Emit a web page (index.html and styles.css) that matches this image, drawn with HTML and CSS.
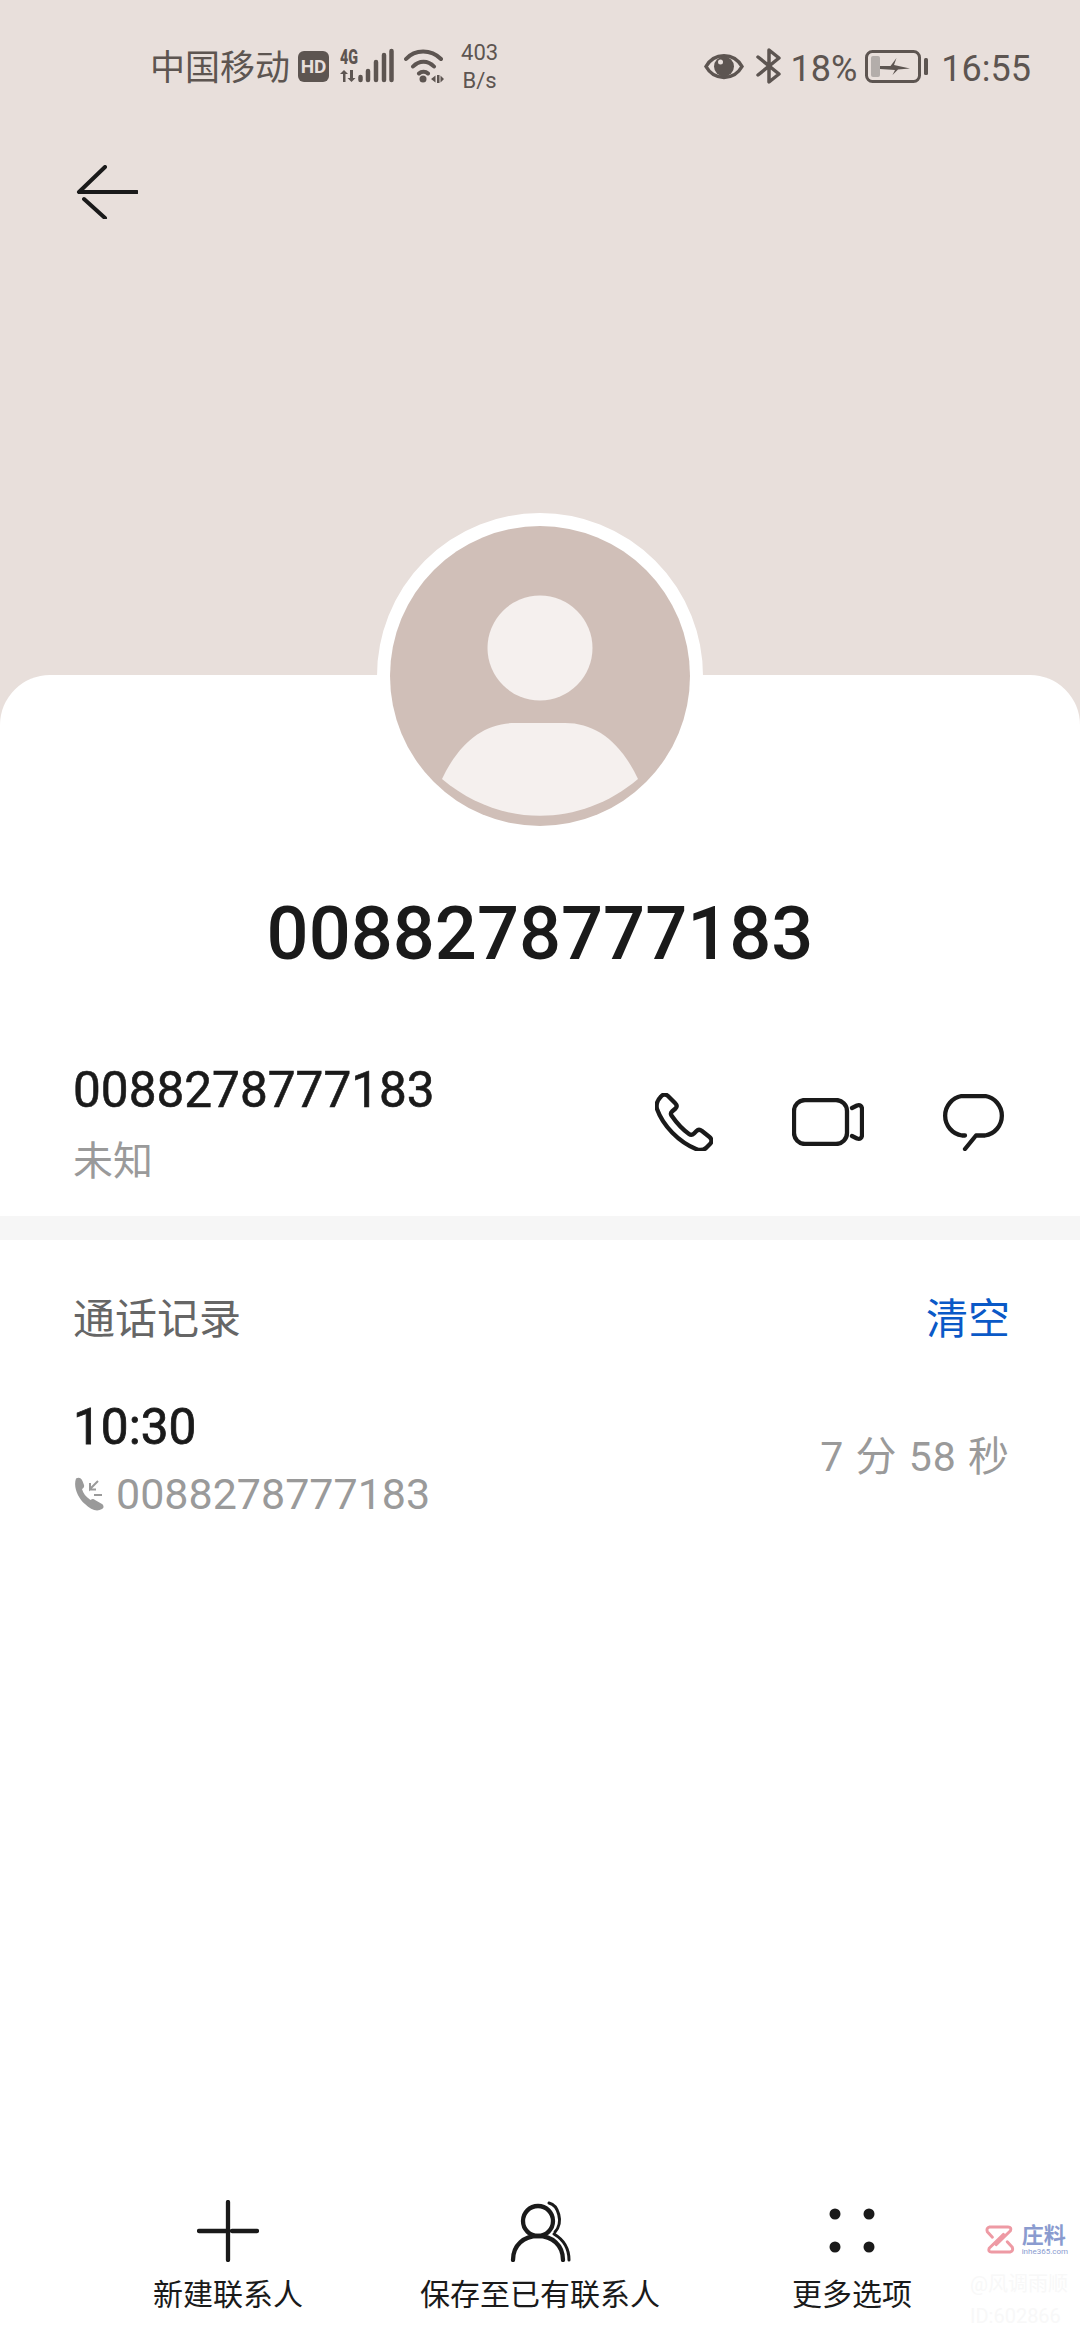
FILE: index.html
```html
<!DOCTYPE html>
<html lang="zh">
<head>
<meta charset="utf-8">
<title>0088278777183</title>
<link rel="stylesheet" href="styles.css">
</head>
<body>
<div class="page">
  <header class="top">
    <div class="status">
      <div class="status-group">
        <span class="carrier">中国移动</span>
        <span class="hd">HD</span>
        <svg class="sig" width="54" height="40" viewBox="0 -6 54 40">
          <text x="0" y="15" class="sig-text" textLength="18" lengthAdjust="spacingAndGlyphs">4G</text>
          <path d="M3 33V25H0L4 21L8 25H5.500V33ZM10 21V29H7.500L11.500 33L15.500 29H13V21Z" fill="#5d5551"/>
          <path d="M20.500 31v-3M28 31V22M36 31V13M44 31V6M51.500 31V2" class="bars"/>
        </svg>
        <svg class="wifi" width="40" height="35" viewBox="0 0 40 35">
          <path d="M2 10C11 0 27 0 37 10M9 17.500C15 11 24 11 30 17.500M15 24.500C17.500 22 21.500 22 24 24.500" class="wave"/>
          <circle cx="19" cy="30" r="3.500" fill="#5d5551"/>
          <path d="M27 30l4.500-3.500v7zM33 26h2.500v8H33zM36.500 26.500l3.500 3.500-3.500 3.500z" fill="#5d5551"/>
        </svg>
        <span class="speed">403<br>B/s</span>
      </div>
      <div class="status-group">
        <svg width="40" height="27" viewBox="0 0 40 27">
          <path d="M2 13.500C10-1 30-1 38 13.500C30 28 10 28 2 13.500Z" fill="none" stroke="#5d5551" stroke-width="3.500"/>
          <circle cx="20" cy="13.500" r="10" fill="#5d5551"/>
          <circle cx="16.500" cy="9" r="2.500" fill="#e8dfdb"/>
        </svg>
        <svg class="bt" width="25" height="36" viewBox="0 0 25 36">
          <path d="M2 9L23 26L13 34V2L23 10L2 27" fill="none" stroke="#5d5551" stroke-width="3.500" stroke-linejoin="round" stroke-linecap="round"/>
        </svg>
        <span class="pct">18%</span>
        <svg class="batt" width="63" height="33" viewBox="0 0 63 33">
          <rect x="1.500" y="1.500" width="53" height="30" rx="6" fill="none" stroke="#5d5551" stroke-width="3"/>
          <rect x="6" y="6" width="9" height="21" rx="2" fill="#b3adaa"/>
          <path d="M15 16H25.500L31.500 8L29 15L45 18.500L33 19.500L27.500 25L30 20L15 19Z" fill="#5d5551"/>
          <rect x="59" y="8" width="4" height="17" rx="1.500" fill="#5d5551"/>
        </svg>
        <span class="clock">16:55</span>
      </div>
    </div>
    <svg class="back" width="62" height="54" viewBox="0 0 62 54">
      <path d="M3 27H61M3 27L29 2M8 34L29 53" fill="none" stroke="#1a1a1a" stroke-width="4" stroke-linecap="round"/>
    </svg>
  </header>

  <main class="card">
    <div class="avatar">
      <svg width="300" height="300" viewBox="0 0 300 300">
        <circle cx="150" cy="150" r="150" fill="#d0bfb8"/>
        <circle cx="150" cy="122" r="52.500" fill="#f5f0ee"/>
        <path d="M52 253C70 215 95 197 125 197H175C205 197 230 215 248 253C190 302 110 302 52 253Z" fill="#f5f0ee"/>
      </svg>
    </div>
    <h1 class="name">0088278777183</h1>

    <section class="contact">
      <div class="contact-text">
        <div class="number">0088278777183</div>
        <div class="location">未知</div>
      </div>
      <div class="actions">
        <svg class="phone" width="58" height="58" viewBox="0 0 58 58">
          <path d="M6 3.500C8 1 11 1 13 3L20 10C22 12 22 14 20.500 15.500L17 18.500C15.500 20 15.500 21 16.500 22.500C21 29 27 36 34 41C36 42.500 37.500 42 39 40.500L41.500 38C43 36.500 45 36.500 47 38L54.500 44C57 46 57 49 55 51L51 55C48 57.500 44.500 57.500 41 56C24 49 8 33 2 16C1 12 2 7.500 6 3.500Z" class="line"/>
        </svg>
        <svg width="72" height="48" viewBox="0 0 72 48">
          <rect x="2" y="2" width="53" height="44" rx="11" class="line"/>
          <path d="M60 10L65 7.500C68 6.500 70 8 70 11V37C70 40 68 41.500 65 40.500L60 38" class="line"/>
        </svg>
        <svg width="67" height="57" viewBox="0 0 67 57">
          <path d="M25 41.500H22A20 20 0 0 1 22 2H45A20 20 0 0 1 45 41.500H36L25 55" class="line"/>
        </svg>
      </div>
    </section>

    <div class="divider"></div>

    <section class="log">
      <div class="log-head">
        <span class="log-title">通话记录</span>
        <span class="log-clear">清空</span>
      </div>
      <div class="log-row">
        <div>
          <div class="log-time">10:30</div>
          <div class="log-num">
            <svg width="32" height="34" viewBox="0 0 32 34">
              <path d="M3 1.500C6 0 8 1 9.500 4L11 8C11.500 10 10.500 11 9 12C10 16 13 20 17.500 23C19 22 20.500 21.500 22 23L29 27C31 28.500 31 31 29 32C24 35 18 33 12 27C5 21 0 10 3 1.500Z" fill="#9a9a9a"/>
              <path d="M25 4L17 12V6M17 12.500H23M21 18H29" fill="none" stroke="#9a9a9a" stroke-width="2"/>
            </svg>
            <span>0088278777183</span>
          </div>
        </div>
        <div class="log-dur">7 分 58 秒</div>
      </div>
    </section>

    <nav class="bottom">
      <div class="bottom-item">
        <svg width="62" height="62" viewBox="0 0 62 62">
          <path d="M31 2V60M2 31H29M35 31H60" class="line"/>
        </svg>
        <span>新建联系人</span>
      </div>
      <div class="bottom-item">
        <svg width="64" height="62" viewBox="0 0 64 62">
          <circle cx="30" cy="21" r="15" class="line"/>
          <path d="M5 60C5 45 16 36 30 36C44 36 55 45 55 60" class="line"/>
          <path d="M41 3C50 5 56 22 47 32M46 34C56 40 61 49 61 60" fill="none" stroke="#1a1a1a" stroke-width="3" stroke-linecap="round"/>
        </svg>
        <span>保存至已有联系人</span>
      </div>
      <div class="bottom-item">
        <svg width="62" height="62" viewBox="0 0 62 62">
          <circle cx="14" cy="14" r="5.500" fill="#1a1a1a"/>
          <circle cx="48" cy="14" r="5.500" fill="#1a1a1a"/>
          <circle cx="14" cy="47" r="5.500" fill="#1a1a1a"/>
          <circle cx="48" cy="47" r="5.500" fill="#1a1a1a"/>
        </svg>
        <span>更多选项</span>
      </div>
    </nav>

    <div class="mark">
      <div class="mark-logo">
        <svg width="32" height="31" viewBox="0 0 32 31">
          <path d="M8 13L2.500 7Q1 3 5 2H25Q29 2 27.500 6L12 21M24 18L29.500 24Q31 28 27 29H7Q3 29 4.500 25L20 10" fill="none" stroke="#ee9aa4" stroke-width="3.200" stroke-linejoin="round" stroke-linecap="round"/>
        </svg>
        <div class="mark-text">
          <div class="mark-cn">庄料</div>
          <div class="mark-en">inhe365.com</div>
        </div>
      </div>
      <div class="mark-faint">@风调雨顺<br>ID:602866</div>
    </div>
  </main>
</div>
</body>
</html>
```
FILE: styles.css
```css
* { box-sizing: border-box; margin: 0; padding: 0; }
html, body { width: 1080px; height: 2340px; overflow: hidden; }
body { font-family: Roboto, "Noto Sans CJK SC", sans-serif; color: #1a1a1a; }
.page { width: 1080px; height: 2340px; background: #e8dfdb; display: flex; flex-direction: column; }

.top { height: 675px; flex: none; }
.status { display: flex; justify-content: space-between; align-items: center; height: 52px; margin-top: 43px; padding: 0 49px 0 150px; color: #5d5551; }
.status-group { display: flex; align-items: center; }
.status svg { margin-top: -6px; }
.carrier { font-size: 35px; line-height: 52px; white-space: nowrap; }
.hd { width: 31px; height: 31px; margin: -5px 0 0 8px; border-radius: 6px; background: #5d5551; color: #e8dfdb; font-size: 19px; font-weight: 700; line-height: 31px; text-align: center; }
.status .sig { margin: -12px 0 0 11px; }
.sig-text { font-family: Roboto, sans-serif; font-size: 21px; font-weight: 900; fill: #5d5551; }
.bars { fill: none; stroke: #5d5551; stroke-width: 4.500; stroke-linecap: round; }
.wifi { margin-left: 10px; }
.wave { fill: none; stroke: #5d5551; stroke-width: 4; stroke-linecap: round; }
.speed { font-size: 22px; line-height: 28px; margin: -4px 0 0 17px; text-align: center; }
.bt { margin-left: 12px; }
.pct { font-size: 36px; margin-left: 10px; line-height: 48px; }
.batt { margin-left: 8px; }
.clock { font-size: 36px; margin-left: 13px; line-height: 48px; }

.back { display: block; margin: 70px 0 0 76px; }

.card { position: relative; flex: 1; background: #fff; border-radius: 50px 50px 0 0; display: flex; flex-direction: column; }
.avatar { align-self: center; width: 326px; height: 326px; margin-top: -162px; border: 13px solid #fff; border-radius: 50%; background: #fff; flex: none; }
.avatar svg { display: block; }
.name { margin-top: 50px; font-size: 74px; font-weight: 500; line-height: 90px; text-align: center; }

.contact { display: flex; justify-content: space-between; align-items: center; height: 179px; margin-top: 58px; padding: 0 73px; }
.contact-text { margin-top: -6px; }
.number { font-size: 49.500px; font-weight: 400; -webkit-text-stroke: 0.6px #1a1a1a; line-height: 68px; }
.location { font-size: 40px; line-height: 60px; margin-top: 8px; color: #9a9a9a; }
.actions { display: flex; align-items: center; gap: 76px; margin-top: -9px; }
.phone { margin-right: 3px; }
.line { fill: none; stroke: #1a1a1a; stroke-width: 4.300; stroke-linecap: round; stroke-linejoin: round; }

.divider { height: 24px; background: #f6f6f6; flex: none; }

.log { padding: 0 70px 0 73px; }
.log-head { display: flex; justify-content: space-between; align-items: center; height: 60px; margin-top: 45px; }
.log-title { font-size: 42px; color: #666; }
.log-clear { font-size: 42px; color: #0a59c7; }
.log-row { display: flex; justify-content: space-between; align-items: center; margin-top: 49px; }
.log-time { font-size: 49.500px; font-weight: 400; -webkit-text-stroke: 0.8px #1a1a1a; line-height: 66px; }
.log-num { display: flex; align-items: center; gap: 11px; margin-top: 4px; font-size: 43px; line-height: 60px; color: #9a9a9a; }
.log-dur { margin-top: -12px; font-size: 41px; color: #9a9a9a; letter-spacing: 1px; }

.bottom { margin-top: auto; display: grid; grid-template-columns: repeat(3, 312px); padding: 0 72px 25px; }
.bottom-item { display: flex; flex-direction: column; align-items: center; font-size: 30px; line-height: 40px; }
.bottom-item svg { margin-bottom: 13px; }

.mark { position: absolute; right: 12px; bottom: 8px; width: 98px; }
.mark-logo { display: flex; align-items: flex-start; gap: 7px; margin-left: 15px; }
.mark-cn { font-size: 22px; line-height: 24px; color: #8a9bcf; font-weight: 700; }
.mark-en { font-size: 8px; line-height: 8px; color: #8a9bcf; }
.mark-faint { margin-top: 12px; font-size: 20px; line-height: 32px; color: #f8f8f8; white-space: nowrap; }
```
